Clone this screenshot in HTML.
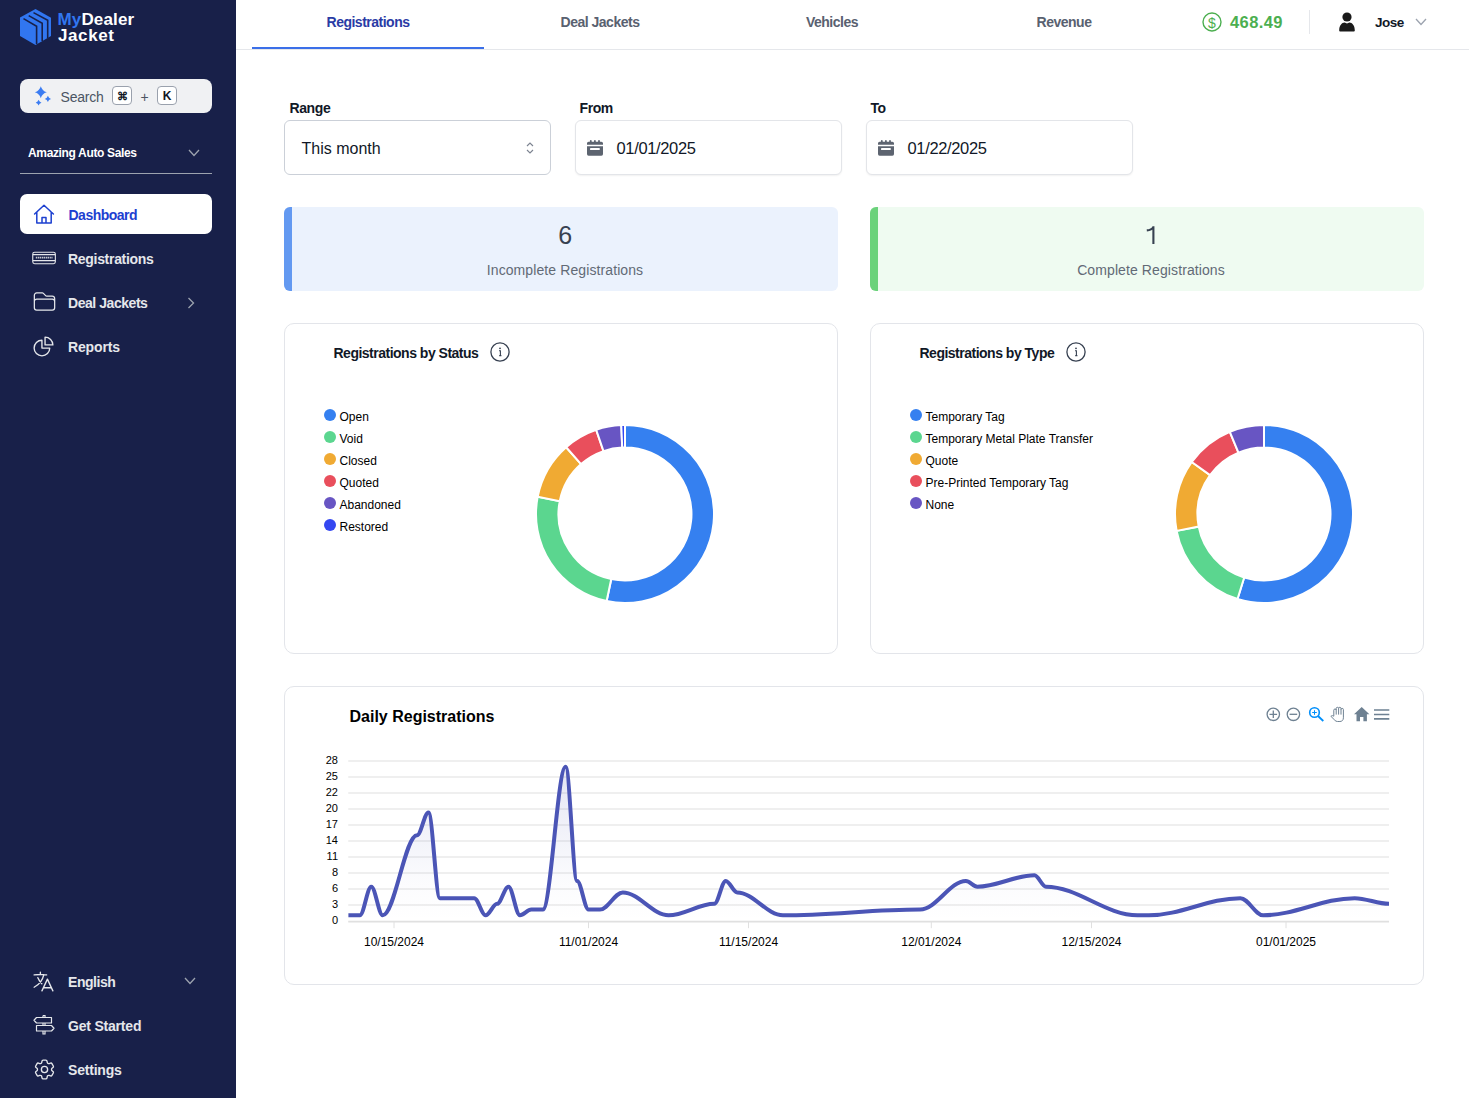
<!DOCTYPE html>
<html><head><meta charset="utf-8"><title>Dashboard</title>
<style>
html,body{margin:0;padding:0;width:1469px;height:1098px;overflow:hidden;background:#fff;font-family:"Liberation Sans", sans-serif}
.t{position:absolute;line-height:1;white-space:nowrap}
svg{overflow:visible}
</style></head><body>
<div style="position:absolute;left:0;top:0;width:236px;height:1098px;background:#182049"></div><svg style="position:absolute;left:0;top:0" width="60" height="50" viewBox="0 0 60 50">
<polygon points="35.5,9 51,17.8 51,36 35.5,45 20,36 20,17.6" fill="#3176f0"/>
<polyline points="23.5,18.6 36.6,26.2 36.6,44" fill="none" stroke="#182049" stroke-width="1.6"/>
<polyline points="28.7,15.6 42.2,23.2 42.2,41" fill="none" stroke="#182049" stroke-width="1.6"/>
<polyline points="33.5,12.6 47.7,20.2 47.7,38" fill="none" stroke="#182049" stroke-width="1.6"/>
</svg><div class="t" style="left:57.5px;top:11.0px;font-size:17px;color:#ffffff;font-weight:700;letter-spacing:0.15px;"><span style="color:#3176f0">My</span>Dealer</div><div class="t" style="left:58.0px;top:26.9px;font-size:17px;color:#ffffff;font-weight:700;letter-spacing:0.6px;">Jacket</div><div style="position:absolute;left:20px;top:79px;width:192px;height:34px;border-radius:8px;background:#f0f1f3"></div><svg style="position:absolute;left:0;top:0" width="236" height="200" viewBox="0 0 236 200"><path d="M40.8,86.2 Q42.12,90.88000000000001 46.8,92.2 Q42.12,93.52 40.8,98.2 Q39.48,93.52 34.8,92.2 Q39.48,90.88000000000001 40.8,86.2Z" fill="#3b7cf2"/><path d="M47.9,95.80000000000001 Q48.582,98.218 51.0,98.9 Q48.582,99.58200000000001 47.9,102.0 Q47.217999999999996,99.58200000000001 44.8,98.9 Q47.217999999999996,98.218 47.9,95.80000000000001Z" fill="#3b7cf2"/><path d="M38.6,99.8 Q39.238,102.062 41.5,102.7 Q39.238,103.33800000000001 38.6,105.60000000000001 Q37.962,103.33800000000001 35.7,102.7 Q37.962,102.062 38.6,99.8Z" fill="#3b7cf2"/></svg><div class="t" style="left:60.5px;top:90.2px;font-size:14px;color:#4b5563;font-weight:400;letter-spacing:-0.2px;">Search</div><div style="position:absolute;left:112px;top:86px;width:18px;height:17px;border:1px solid #9aa1ad;border-radius:4px;background:#fff"></div><div class="t" style="left:-178.0px;width:600px;text-align:center;top:91.2px;font-size:11px;color:#111827;font-weight:700;letter-spacing:0px">&#8984;</div><div class="t" style="left:140.5px;top:89.6px;font-size:14px;color:#4b5563;font-weight:400;letter-spacing:0px;">+</div><div style="position:absolute;left:157px;top:86px;width:18px;height:17px;border:1px solid #9aa1ad;border-radius:4px;background:#fff"></div><div class="t" style="left:-133.0px;width:600px;text-align:center;top:89.8px;font-size:12px;color:#111827;font-weight:700;letter-spacing:0px">K</div><div class="t" style="left:28.0px;top:146.8px;font-size:12px;color:#ffffff;font-weight:700;letter-spacing:-0.35px;">Amazing Auto Sales</div><svg style="position:absolute;left:186px;top:146px" width="16" height="14" viewBox="0 0 16 14"><path d="M3 4 L8 9.5 L13 4" fill="none" stroke="#9ca3af" stroke-width="1.3"/></svg><div style="position:absolute;left:20px;top:173px;width:192px;height:1px;background:#9ca3af"></div><div style="position:absolute;left:20px;top:194px;width:192px;height:40px;border-radius:7px;background:#ffffff"></div><svg style="position:absolute;left:32px;top:202px" width="24" height="24" viewBox="0 0 24 24"><path d="M2.6 12 L12 3.2 L21.4 12 M4.8 9.9 V21 H19.2 V9.9 M10 21 V15.5 H14 V21" fill="none" stroke="#1d40d0" stroke-width="1.5" stroke-linejoin="round" stroke-linecap="round"/></svg><div class="t" style="left:68.5px;top:207.8px;font-size:14px;color:#1d40d0;font-weight:700;letter-spacing:-0.5px;">Dashboard</div><svg style="position:absolute;left:32px;top:250px" width="26" height="16" viewBox="0 0 26 16"><rect x="0.75" y="2.2" width="22.6" height="11.5" rx="1.9" fill="none" stroke="#e5e7eb" stroke-width="1.1"/><path d="M1 4.6 H23.1 M1 10.6 H23.1" stroke="#e5e7eb" stroke-width="1.1"/><path d="M3.8 7.6 H20.5" stroke="#e5e7eb" stroke-width="1.7" stroke-dasharray="1.6 0.6 1.2 0.5" opacity="0.85"/></svg><div class="t" style="left:68.0px;top:252.1px;font-size:14px;color:#e5e7eb;font-weight:700;letter-spacing:-0.3px;">Registrations</div><svg style="position:absolute;left:31.5px;top:289px" width="25" height="25" viewBox="0 0 24 24"><path d="M2.25 12.75V12A2.25 2.25 0 0 1 4.5 9.75h15A2.25 2.25 0 0 1 21.75 12v.75m-8.69-6.44-2.12-2.12a1.5 1.5 0 0 0-1.061-.44H4.5A2.25 2.25 0 0 0 2.25 6v12a2.25 2.25 0 0 0 2.25 2.25h15A2.25 2.25 0 0 0 21.75 18V9a2.25 2.25 0 0 0-2.25-2.25h-5.379a1.5 1.5 0 0 1-1.06-.44Z" fill="none" stroke="#e5e7eb" stroke-width="1.2"/></svg><div class="t" style="left:68.0px;top:296.1px;font-size:14px;color:#e5e7eb;font-weight:700;letter-spacing:-0.45px;">Deal Jackets</div><svg style="position:absolute;left:184px;top:295px" width="14" height="16" viewBox="0 0 14 16"><path d="M4.5 3 L9.5 8 L4.5 13" fill="none" stroke="#9ca3af" stroke-width="1.3"/></svg><svg style="position:absolute;left:31px;top:334px" width="25" height="25" viewBox="0 0 24 24"><path d="M10.5 6a7.5 7.5 0 1 0 7.5 7.5h-7.5V6Z" fill="none" stroke="#e5e7eb" stroke-width="1.3" stroke-linejoin="round"/><path d="M13.5 10.5H21A7.5 7.5 0 0 0 13.5 3v7.5Z" fill="none" stroke="#e5e7eb" stroke-width="1.3" stroke-linejoin="round"/></svg><div class="t" style="left:68.0px;top:340.1px;font-size:14px;color:#e5e7eb;font-weight:700;letter-spacing:-0.15px;">Reports</div><svg style="position:absolute;left:31px;top:969px" width="25" height="25" viewBox="0 0 24 24"><path d="m10.5 21 5.25-11.25L21 21m-9-3h7.5M3 5.621a48.474 48.474 0 0 1 6-.371m0 0c1.12 0 2.233.038 3.334.114M9 5.25V3m3.334 2.364C11.176 10.658 7.69 15.08 3 17.502m9.334-12.138c.896.061 1.785.147 2.666.257m-4.589 8.495a18.023 18.023 0 0 1-3.827-5.802" fill="none" stroke="#e5e7eb" stroke-width="1.3" stroke-linecap="round" stroke-linejoin="round"/></svg><div class="t" style="left:68.0px;top:975.1px;font-size:14px;color:#e5e7eb;font-weight:700;letter-spacing:-0.45px;">English</div><svg style="position:absolute;left:182px;top:974px" width="16" height="14" viewBox="0 0 16 14"><path d="M3 4 L8 9.5 L13 4" fill="none" stroke="#9ca3af" stroke-width="1.3"/></svg><svg style="position:absolute;left:32px;top:1013px" width="24" height="24" viewBox="0 0 24 24"><path d="M11 2.5 h2 v2 M11 2.5 v2" fill="none" stroke="#e5e7eb" stroke-width="1.2"/><path d="M4.5 4.5 H19.5 V10 H4.5 L2 7.25 Z" fill="none" stroke="#e5e7eb" stroke-width="1.2" stroke-linejoin="round"/><path d="M4.5 12.5 H19.5 L22 15.25 L19.5 18 H4.5 Z" fill="none" stroke="#e5e7eb" stroke-width="1.2" stroke-linejoin="round"/><path d="M11 10 V12.5 M13 10 V12.5 M11 18 V21 H13 V18" fill="none" stroke="#e5e7eb" stroke-width="1.2"/></svg><div class="t" style="left:68.0px;top:1019.1px;font-size:14px;color:#e5e7eb;font-weight:700;letter-spacing:-0.2px;">Get Started</div><svg style="position:absolute;left:31.5px;top:1057px" width="25" height="25" viewBox="0 0 24 24"><path d="M9.594 3.94c.09-.542.56-.94 1.11-.94h2.593c.55 0 1.02.398 1.11.94l.213 1.281c.063.374.313.686.645.87.074.04.147.083.22.127.325.196.72.257 1.075.124l1.217-.456a1.125 1.125 0 0 1 1.37.49l1.296 2.247a1.125 1.125 0 0 1-.26 1.431l-1.003.827c-.293.241-.438.613-.43.992a7.723 7.723 0 0 1 0 .255c-.008.378.137.75.43.991l1.004.827c.424.35.534.955.26 1.43l-1.298 2.247a1.125 1.125 0 0 1-1.369.491l-1.217-.456c-.355-.133-.75-.072-1.076.124a6.47 6.47 0 0 1-.22.128c-.331.183-.581.495-.644.869l-.213 1.281c-.09.543-.56.94-1.11.94h-2.594c-.55 0-1.019-.398-1.11-.94l-.213-1.281c-.062-.374-.312-.686-.644-.87a6.52 6.52 0 0 1-.22-.127c-.325-.196-.72-.257-1.076-.124l-1.217.456a1.125 1.125 0 0 1-1.369-.49l-1.297-2.247a1.125 1.125 0 0 1 .26-1.431l1.004-.827c.292-.24.437-.613.43-.991a6.932 6.932 0 0 1 0-.255c.007-.38-.138-.751-.43-.992l-1.004-.827a1.125 1.125 0 0 1-.26-1.43l1.297-2.247a1.125 1.125 0 0 1 1.37-.491l1.216.456c.356.133.751.072 1.076-.124.072-.044.146-.086.22-.128.332-.183.582-.495.644-.869l.214-1.28Z" fill="none" stroke="#e5e7eb" stroke-width="1.3" stroke-linejoin="round"/><circle cx="12" cy="12" r="3" fill="none" stroke="#e5e7eb" stroke-width="1.3"/></svg><div class="t" style="left:68.0px;top:1063.1px;font-size:14px;color:#e5e7eb;font-weight:700;letter-spacing:-0.2px;">Settings</div><div style="position:absolute;left:236px;top:49px;width:1233px;height:1px;background:#e5e7eb"></div><div style="position:absolute;left:252px;top:47px;width:232px;height:2px;background:#3b6fe8"></div><div class="t" style="left:68.0px;width:600px;text-align:center;top:15.3px;font-size:14px;color:#2a3ba5;font-weight:700;letter-spacing:-0.5px">Registrations</div><div class="t" style="left:300.0px;width:600px;text-align:center;top:15.3px;font-size:14px;color:#596170;font-weight:700;letter-spacing:-0.5px">Deal Jackets</div><div class="t" style="left:532.0px;width:600px;text-align:center;top:15.3px;font-size:14px;color:#596170;font-weight:700;letter-spacing:-0.5px">Vehicles</div><div class="t" style="left:764.0px;width:600px;text-align:center;top:15.3px;font-size:14px;color:#596170;font-weight:700;letter-spacing:-0.5px">Revenue</div><svg style="position:absolute;left:1200px;top:10px" width="24" height="24" viewBox="0 0 24 24"><circle cx="12" cy="12" r="9" fill="none" stroke="#4caf50" stroke-width="1.4"/></svg><div class="t" style="left:912.0px;width:600px;text-align:center;top:15.6px;font-size:14px;color:#4caf50;font-weight:400;letter-spacing:0px">$</div><div class="t" style="left:1230.0px;top:13.7px;font-size:16.5px;color:#4caf50;font-weight:700;letter-spacing:0.4px;">468.49</div><div style="position:absolute;left:1309px;top:10px;width:1px;height:24px;background:#e5e7eb"></div><svg style="position:absolute;left:1336px;top:10px" width="22" height="24" viewBox="0 0 22 24"><circle cx="11" cy="7" r="4.6" fill="#1a1a1a"/><path d="M3.2 20.5 C3.2 15.5 5.8 12.8 8.6 12.6 L11 13.6 L13.4 12.6 C16.2 12.8 18.8 15.5 18.8 20.5 C18.8 21.3 18.3 21.6 17.5 21.6 H4.5 C3.7 21.6 3.2 21.3 3.2 20.5Z" fill="#1a1a1a"/></svg><div class="t" style="left:1375.0px;top:16.2px;font-size:13.5px;color:#111827;font-weight:700;letter-spacing:-0.5px;">Jose</div><svg style="position:absolute;left:1413px;top:15px" width="16" height="14" viewBox="0 0 16 14"><path d="M3 4 L8 9.5 L13 4" fill="none" stroke="#9ca3af" stroke-width="1.3"/></svg><div class="t" style="left:289.5px;top:101.2px;font-size:14px;color:#111827;font-weight:700;letter-spacing:-0.4px;">Range</div><div class="t" style="left:579.5px;top:101.2px;font-size:14px;color:#111827;font-weight:700;letter-spacing:-0.4px;">From</div><div class="t" style="left:870.5px;top:101.2px;font-size:14px;color:#111827;font-weight:700;letter-spacing:-0.4px;">To</div><div style="position:absolute;left:284px;top:120px;width:265px;height:53px;border:1px solid #cbd0d8;border-radius:6px;background:#fff"></div><div class="t" style="left:301.5px;top:140.8px;font-size:16px;color:#111827;font-weight:400;letter-spacing:0px;">This month</div><svg style="position:absolute;left:522px;top:139px" width="16" height="18" viewBox="0 0 16 18"><path d="M5 7 L8 4 L11 7 M5 11 L8 14 L11 11" fill="none" stroke="#7d8491" stroke-width="1.15"/></svg><div style="position:absolute;left:575px;top:120px;width:265px;height:53px;border:1px solid #e3e5e9;border-radius:6px;background:#fff;box-shadow:0 1px 2px rgba(0,0,0,0.06)"></div><svg style="position:absolute;left:586px;top:139px" width="18" height="18" viewBox="0 0 18 18"><path d="M1 5.7 V4.3 A1.6 1.6 0 0 1 2.6 2.7 H15.4 A1.6 1.6 0 0 1 17 4.3 V5.7 Z" fill="#5d6470"/><rect x="3.9" y="1" width="1.8" height="2.6" rx="0.9" fill="#5d6470"/><rect x="8" y="1" width="1.8" height="2.6" rx="0.9" fill="#5d6470"/><rect x="12.1" y="1" width="1.8" height="2.6" rx="0.9" fill="#5d6470"/><path d="M1 7.3 H17 V15.1 A1.6 1.6 0 0 1 15.4 16.7 H2.6 A1.6 1.6 0 0 1 1 15.1 Z" fill="#5d6470"/><rect x="4" y="9" width="9.8" height="2" rx="0.4" fill="#fff"/></svg><div class="t" style="left:616.5px;top:140.3px;font-size:16.5px;color:#111827;font-weight:400;letter-spacing:-0.35px;">01/01/2025</div><div style="position:absolute;left:866px;top:120px;width:265px;height:53px;border:1px solid #e3e5e9;border-radius:6px;background:#fff;box-shadow:0 1px 2px rgba(0,0,0,0.06)"></div><svg style="position:absolute;left:877px;top:139px" width="18" height="18" viewBox="0 0 18 18"><path d="M1 5.7 V4.3 A1.6 1.6 0 0 1 2.6 2.7 H15.4 A1.6 1.6 0 0 1 17 4.3 V5.7 Z" fill="#5d6470"/><rect x="3.9" y="1" width="1.8" height="2.6" rx="0.9" fill="#5d6470"/><rect x="8" y="1" width="1.8" height="2.6" rx="0.9" fill="#5d6470"/><rect x="12.1" y="1" width="1.8" height="2.6" rx="0.9" fill="#5d6470"/><path d="M1 7.3 H17 V15.1 A1.6 1.6 0 0 1 15.4 16.7 H2.6 A1.6 1.6 0 0 1 1 15.1 Z" fill="#5d6470"/><rect x="4" y="9" width="9.8" height="2" rx="0.4" fill="#fff"/></svg><div class="t" style="left:907.5px;top:140.3px;font-size:16.5px;color:#111827;font-weight:400;letter-spacing:-0.35px;">01/22/2025</div><div style="position:absolute;left:284px;top:207px;width:554px;height:84px;border-radius:6px;background:#ebf2fd;overflow:hidden"><div style="position:absolute;left:0;top:0;width:8px;height:84px;background:#6399f1"></div></div><div class="t" style="left:265.2px;width:600px;text-align:center;top:223.1px;font-size:25px;color:#374151;font-weight:400;letter-spacing:0px">6</div><div class="t" style="left:265.0px;width:600px;text-align:center;top:263.3px;font-size:14px;color:#626a76;font-weight:400;letter-spacing:0.1px">Incomplete Registrations</div><div style="position:absolute;left:870px;top:207px;width:554px;height:84px;border-radius:6px;background:#effbf1;overflow:hidden"><div style="position:absolute;left:0;top:0;width:8px;height:84px;background:#6bd27b"></div></div><svg style="position:absolute;left:0;top:0" width="1469" height="300"><path d="M1153.4 226.2 V243.9 M1153.4 226.9 C1152.2 229 1150 230.1 1146.8 230.4" fill="none" stroke="#374151" stroke-width="2.1"/></svg><div class="t" style="left:851.0px;width:600px;text-align:center;top:263.3px;font-size:14px;color:#626a76;font-weight:400;letter-spacing:0.1px">Complete Registrations</div><div style="position:absolute;left:284px;top:323px;width:552px;height:329px;border:1px solid #e3e5ea;border-radius:10px;background:#fff"></div><div style="position:absolute;left:870px;top:323px;width:552px;height:329px;border:1px solid #e3e5ea;border-radius:10px;background:#fff"></div><div class="t" style="left:333.5px;top:346.4px;font-size:14px;color:#111827;font-weight:700;letter-spacing:-0.5px;">Registrations by Status</div><svg style="position:absolute;left:490px;top:342px" width="20" height="20" viewBox="0 0 20 20"><circle cx="10" cy="10" r="9.1" fill="none" stroke="#374151" stroke-width="1.3"/><circle cx="10" cy="6.3" r="0.9" fill="#374151"/><path d="M9 8.8 H10.4 V13.6 H9.2 M10.4 13.6 H11.4" fill="none" stroke="#374151" stroke-width="1.1"/></svg><div class="t" style="left:919.5px;top:346.4px;font-size:14px;color:#111827;font-weight:700;letter-spacing:-0.5px;">Registrations by Type</div><svg style="position:absolute;left:1066px;top:342px" width="20" height="20" viewBox="0 0 20 20"><circle cx="10" cy="10" r="9.1" fill="none" stroke="#374151" stroke-width="1.3"/><circle cx="10" cy="6.3" r="0.9" fill="#374151"/><path d="M9 8.8 H10.4 V13.6 H9.2 M10.4 13.6 H11.4" fill="none" stroke="#374151" stroke-width="1.1"/></svg><div style="position:absolute;left:324px;top:409px;width:12px;height:12px;border-radius:6px;background:#3580f0"></div><div class="t" style="left:339.5px;top:410.5px;font-size:12px;color:#000000;font-weight:400;letter-spacing:0px;">Open</div><div style="position:absolute;left:324px;top:431px;width:12px;height:12px;border-radius:6px;background:#5bd68f"></div><div class="t" style="left:339.5px;top:432.5px;font-size:12px;color:#000000;font-weight:400;letter-spacing:0px;">Void</div><div style="position:absolute;left:324px;top:453px;width:12px;height:12px;border-radius:6px;background:#f0aa33"></div><div class="t" style="left:339.5px;top:454.5px;font-size:12px;color:#000000;font-weight:400;letter-spacing:0px;">Closed</div><div style="position:absolute;left:324px;top:475px;width:12px;height:12px;border-radius:6px;background:#e94f5c"></div><div class="t" style="left:339.5px;top:476.5px;font-size:12px;color:#000000;font-weight:400;letter-spacing:0px;">Quoted</div><div style="position:absolute;left:324px;top:497px;width:12px;height:12px;border-radius:6px;background:#6855c3"></div><div class="t" style="left:339.5px;top:498.5px;font-size:12px;color:#000000;font-weight:400;letter-spacing:0px;">Abandoned</div><div style="position:absolute;left:324px;top:519px;width:12px;height:12px;border-radius:6px;background:#3447f1"></div><div class="t" style="left:339.5px;top:520.5px;font-size:12px;color:#000000;font-weight:400;letter-spacing:0px;">Restored</div><div style="position:absolute;left:910px;top:409px;width:12px;height:12px;border-radius:6px;background:#3580f0"></div><div class="t" style="left:925.5px;top:410.5px;font-size:12px;color:#000000;font-weight:400;letter-spacing:0px;">Temporary Tag</div><div style="position:absolute;left:910px;top:431px;width:12px;height:12px;border-radius:6px;background:#5bd68f"></div><div class="t" style="left:925.5px;top:432.5px;font-size:12px;color:#000000;font-weight:400;letter-spacing:0px;">Temporary Metal Plate Transfer</div><div style="position:absolute;left:910px;top:453px;width:12px;height:12px;border-radius:6px;background:#f0aa33"></div><div class="t" style="left:925.5px;top:454.5px;font-size:12px;color:#000000;font-weight:400;letter-spacing:0px;">Quote</div><div style="position:absolute;left:910px;top:475px;width:12px;height:12px;border-radius:6px;background:#e94f5c"></div><div class="t" style="left:925.5px;top:476.5px;font-size:12px;color:#000000;font-weight:400;letter-spacing:0px;">Pre-Printed Temporary Tag</div><div style="position:absolute;left:910px;top:497px;width:12px;height:12px;border-radius:6px;background:#6855c3"></div><div class="t" style="left:925.5px;top:498.5px;font-size:12px;color:#000000;font-weight:400;letter-spacing:0px;">None</div><svg style="position:absolute;left:525.1px;top:413.79999999999995px" width="200" height="200" viewBox="525.1 413.79999999999995 200 200"><path d="M625.10,424.80 A89,89 0 1 1 606.72,600.88 L611.36,578.87 A66.5,66.5 0 1 0 625.10,447.30 Z" fill="#3580f0" stroke="#fff" stroke-width="2"/><path d="M606.72,600.88 A89,89 0 0 1 537.77,496.62 L559.85,500.96 A66.5,66.5 0 0 0 611.36,578.87 Z" fill="#5bd68f" stroke="#fff" stroke-width="2"/><path d="M537.77,496.62 A89,89 0 0 1 566.26,447.02 L581.14,463.90 A66.5,66.5 0 0 0 559.85,500.96 Z" fill="#f0aa33" stroke="#fff" stroke-width="2"/><path d="M566.26,447.02 A89,89 0 0 1 596.28,429.59 L603.57,450.88 A66.5,66.5 0 0 0 581.14,463.90 Z" fill="#e94f5c" stroke="#fff" stroke-width="2"/><path d="M596.28,429.59 A89,89 0 0 1 621.37,424.88 L622.32,447.36 A66.5,66.5 0 0 0 603.57,450.88 Z" fill="#6855c3" stroke="#fff" stroke-width="2"/><path d="M621.37,424.88 A89,89 0 0 1 625.10,424.80 L625.10,447.30 A66.5,66.5 0 0 0 622.32,447.36 Z" fill="#3447f1" stroke="#fff" stroke-width="2"/></svg><svg style="position:absolute;left:1164px;top:413.79999999999995px" width="200" height="200" viewBox="1164 413.79999999999995 200 200"><path d="M1264.00,424.80 A89,89 0 1 1 1237.50,598.76 L1244.20,577.28 A66.5,66.5 0 1 0 1264.00,447.30 Z" fill="#3580f0" stroke="#fff" stroke-width="2"/><path d="M1237.50,598.76 A89,89 0 0 1 1176.61,530.66 L1198.70,526.40 A66.5,66.5 0 0 0 1244.20,577.28 Z" fill="#5bd68f" stroke="#fff" stroke-width="2"/><path d="M1176.61,530.66 A89,89 0 0 1 1191.79,461.77 L1210.05,474.92 A66.5,66.5 0 0 0 1198.70,526.40 Z" fill="#f0aa33" stroke="#fff" stroke-width="2"/><path d="M1191.79,461.77 A89,89 0 0 1 1229.81,431.63 L1238.45,452.40 A66.5,66.5 0 0 0 1210.05,474.92 Z" fill="#e94f5c" stroke="#fff" stroke-width="2"/><path d="M1229.81,431.63 A89,89 0 0 1 1264.00,424.80 L1264.00,447.30 A66.5,66.5 0 0 0 1238.45,452.40 Z" fill="#6855c3" stroke="#fff" stroke-width="2"/></svg><div style="position:absolute;left:284px;top:686px;width:1138px;height:297px;border:1px solid #e3e5ea;border-radius:10px;background:#fff"></div><div class="t" style="left:349.5px;top:708.5px;font-size:16px;color:#000000;font-weight:700;letter-spacing:0px;">Daily Registrations</div><svg style="position:absolute;left:0;top:0" width="1469" height="1098" viewBox="0 0 1469 1098"><circle cx="1273.3" cy="714.3" r="6.2" fill="none" stroke="#6e8192" stroke-width="1.3"/><path d="M1273.3 710.5 V718.1 M1269.5 714.3 H1277.1" stroke="#6e8192" stroke-width="1.3"/><circle cx="1293.4" cy="714.3" r="6.2" fill="none" stroke="#6e8192" stroke-width="1.3"/><path d="M1289.6 714.3 H1297.2" stroke="#6e8192" stroke-width="1.3"/><circle cx="1314.5" cy="712.5" r="4.8" fill="none" stroke="#008ffb" stroke-width="1.6"/><path d="M1314.5 710.2 V714.8 M1312.2 712.5 H1316.8" stroke="#008ffb" stroke-width="1"/><path d="M1318 716 L1323.3 721" stroke="#008ffb" stroke-width="1.8"/><g transform="translate(1330.3 706.6)"><path d="M3.5,9.6 V3.6 a1.2,1.2 0 0 1 2.4,0 V1.9 a1.2,1.2 0 0 1 2.4,0 V1.9 a1.2,1.2 0 0 1 2.4,0 V3 a1.2,1.2 0 0 1 2.4,0 V11.2 C13.1,13.6 11.6,14.9 9.6,14.9 H7.2 C6,14.9 5.2,14.4 4.5,13.6 L0.6,9.7 C1.1,9 1.9,8.8 2.6,9.2 Z M5.9,3.6 V8 M8.3,1.9 V8 M10.7,3 V8" fill="none" stroke="#6e8192" stroke-width="1" stroke-linejoin="round"/></g><path d="M1361.7 707 L1354 714.3 H1356.5 V721.2 H1360 V717 H1363.4 V721.2 H1366.9 V714.3 H1369.4 Z" fill="#6e8192"/><path d="M1374 710 H1389.3 M1374 714.5 H1389.3 M1374 718.9 H1389.3" stroke="#6e8192" stroke-width="1.6"/></svg><svg style="position:absolute;left:0;top:0;font-family:"Liberation Sans", sans-serif" width="1469" height="1098" viewBox="0 0 1469 1098"><line x1="348.2" y1="761" x2="1389" y2="761" stroke="#e0e0e0" stroke-width="1.2"/><line x1="348.2" y1="777" x2="1389" y2="777" stroke="#e0e0e0" stroke-width="1.2"/><line x1="348.2" y1="793" x2="1389" y2="793" stroke="#e0e0e0" stroke-width="1.2"/><line x1="348.2" y1="809" x2="1389" y2="809" stroke="#e0e0e0" stroke-width="1.2"/><line x1="348.2" y1="825" x2="1389" y2="825" stroke="#e0e0e0" stroke-width="1.2"/><line x1="348.2" y1="841" x2="1389" y2="841" stroke="#e0e0e0" stroke-width="1.2"/><line x1="348.2" y1="857" x2="1389" y2="857" stroke="#e0e0e0" stroke-width="1.2"/><line x1="348.2" y1="873" x2="1389" y2="873" stroke="#e0e0e0" stroke-width="1.2"/><line x1="348.2" y1="889" x2="1389" y2="889" stroke="#e0e0e0" stroke-width="1.2"/><line x1="348.2" y1="905" x2="1389" y2="905" stroke="#e0e0e0" stroke-width="1.2"/><line x1="348.2" y1="921.6" x2="1389" y2="921.6" stroke="#e0e0e0" stroke-width="1.9"/><text x="338" y="763.5" text-anchor="end" font-size="11" fill="#000">28</text><text x="338" y="779.5" text-anchor="end" font-size="11" fill="#000">25</text><text x="338" y="795.5" text-anchor="end" font-size="11" fill="#000">22</text><text x="338" y="811.5" text-anchor="end" font-size="11" fill="#000">20</text><text x="338" y="827.5" text-anchor="end" font-size="11" fill="#000">17</text><text x="338" y="843.5" text-anchor="end" font-size="11" fill="#000">14</text><text x="338" y="859.5" text-anchor="end" font-size="11" fill="#000">11</text><text x="338" y="875.5" text-anchor="end" font-size="11" fill="#000">8</text><text x="338" y="891.5" text-anchor="end" font-size="11" fill="#000">6</text><text x="338" y="907.5" text-anchor="end" font-size="11" fill="#000">3</text><text x="338" y="923.5" text-anchor="end" font-size="11" fill="#000">0</text><line x1="394" y1="921" x2="394" y2="928.2" stroke="#e0e0e0" stroke-width="1"/><text x="394" y="945.8" text-anchor="middle" font-size="12" fill="#000">10/15/2024</text><line x1="588.5" y1="921" x2="588.5" y2="928.2" stroke="#e0e0e0" stroke-width="1"/><text x="588.5" y="945.8" text-anchor="middle" font-size="12" fill="#000">11/01/2024</text><line x1="748.5" y1="921" x2="748.5" y2="928.2" stroke="#e0e0e0" stroke-width="1"/><text x="748.5" y="945.8" text-anchor="middle" font-size="12" fill="#000">11/15/2024</text><line x1="931.3" y1="921" x2="931.3" y2="928.2" stroke="#e0e0e0" stroke-width="1"/><text x="931.3" y="945.8" text-anchor="middle" font-size="12" fill="#000">12/01/2024</text><line x1="1091.5" y1="921" x2="1091.5" y2="928.2" stroke="#e0e0e0" stroke-width="1"/><text x="1091.5" y="945.8" text-anchor="middle" font-size="12" fill="#000">12/15/2024</text><line x1="1286" y1="921" x2="1286" y2="928.2" stroke="#e0e0e0" stroke-width="1"/><text x="1286" y="945.8" text-anchor="middle" font-size="12" fill="#000">01/01/2025</text><defs><linearGradient id="fg" x1="0" y1="766" x2="0" y2="921" gradientUnits="userSpaceOnUse"><stop offset="0" stop-color="#4b55b5" stop-opacity="0.15"/><stop offset="0.75" stop-color="#4b55b5" stop-opacity="0.02"/><stop offset="1" stop-color="#4b55b5" stop-opacity="0"/></linearGradient></defs><path d="M348.40,915.29 C352.40,915.29 355.83,915.29 359.84,915.29 C363.84,915.29 367.27,886.71 371.27,886.71 C375.27,886.71 378.70,915.29 382.71,915.29 C394.71,915.29 405.00,835.29 417.01,835.29 C421.01,835.29 424.44,812.43 428.45,812.43 C432.45,812.43 435.88,898.14 439.88,898.14 C451.89,898.14 462.18,898.14 474.19,898.14 C478.19,898.14 481.62,915.29 485.62,915.29 C489.62,915.29 493.05,903.86 497.06,903.86 C501.06,903.86 504.49,886.71 508.49,886.71 C512.49,886.71 515.93,915.29 519.93,915.29 C523.93,915.29 527.36,909.57 531.36,909.57 C535.36,909.57 538.80,909.57 542.80,909.57 C550.80,909.57 557.66,766.71 565.67,766.71 C569.67,766.71 573.10,881.00 577.10,881.00 C581.11,881.00 584.54,909.57 588.54,909.57 C592.54,909.57 595.97,909.57 599.97,909.57 C607.98,909.57 614.84,892.43 622.84,892.43 C638.85,892.43 652.58,915.29 668.58,915.29 C684.59,915.29 698.32,903.86 714.33,903.86 C718.33,903.86 721.76,881.00 725.76,881.00 C729.76,881.00 733.19,892.43 737.20,892.43 C753.20,892.43 766.93,915.29 782.94,915.29 C830.96,915.29 872.13,909.57 920.16,909.57 C936.17,909.57 949.89,881.00 965.90,881.00 C969.90,881.00 973.33,886.71 977.33,886.71 C997.35,886.71 1014.50,875.29 1034.51,875.29 C1038.51,875.29 1041.94,886.71 1045.95,886.71 C1077.96,886.71 1105.41,915.29 1137.43,915.29 C1141.43,915.29 1144.86,915.29 1148.86,915.29 C1180.88,915.29 1208.32,898.14 1240.34,898.14 C1248.35,898.14 1255.21,915.29 1263.21,915.29 C1295.23,915.29 1322.68,898.14 1354.69,898.14 C1366.70,898.14 1376.99,903.86 1389.00,903.86 L1389,921 L349,921 Z" fill="url(#fg)"/><path d="M348.40,915.29 C352.40,915.29 355.83,915.29 359.84,915.29 C363.84,915.29 367.27,886.71 371.27,886.71 C375.27,886.71 378.70,915.29 382.71,915.29 C394.71,915.29 405.00,835.29 417.01,835.29 C421.01,835.29 424.44,812.43 428.45,812.43 C432.45,812.43 435.88,898.14 439.88,898.14 C451.89,898.14 462.18,898.14 474.19,898.14 C478.19,898.14 481.62,915.29 485.62,915.29 C489.62,915.29 493.05,903.86 497.06,903.86 C501.06,903.86 504.49,886.71 508.49,886.71 C512.49,886.71 515.93,915.29 519.93,915.29 C523.93,915.29 527.36,909.57 531.36,909.57 C535.36,909.57 538.80,909.57 542.80,909.57 C550.80,909.57 557.66,766.71 565.67,766.71 C569.67,766.71 573.10,881.00 577.10,881.00 C581.11,881.00 584.54,909.57 588.54,909.57 C592.54,909.57 595.97,909.57 599.97,909.57 C607.98,909.57 614.84,892.43 622.84,892.43 C638.85,892.43 652.58,915.29 668.58,915.29 C684.59,915.29 698.32,903.86 714.33,903.86 C718.33,903.86 721.76,881.00 725.76,881.00 C729.76,881.00 733.19,892.43 737.20,892.43 C753.20,892.43 766.93,915.29 782.94,915.29 C830.96,915.29 872.13,909.57 920.16,909.57 C936.17,909.57 949.89,881.00 965.90,881.00 C969.90,881.00 973.33,886.71 977.33,886.71 C997.35,886.71 1014.50,875.29 1034.51,875.29 C1038.51,875.29 1041.94,886.71 1045.95,886.71 C1077.96,886.71 1105.41,915.29 1137.43,915.29 C1141.43,915.29 1144.86,915.29 1148.86,915.29 C1180.88,915.29 1208.32,898.14 1240.34,898.14 C1248.35,898.14 1255.21,915.29 1263.21,915.29 C1295.23,915.29 1322.68,898.14 1354.69,898.14 C1366.70,898.14 1376.99,903.86 1389.00,903.86" fill="none" stroke="#4b55b6" stroke-width="4" stroke-linecap="butt" stroke-linejoin="round"/></svg>
</body></html>
